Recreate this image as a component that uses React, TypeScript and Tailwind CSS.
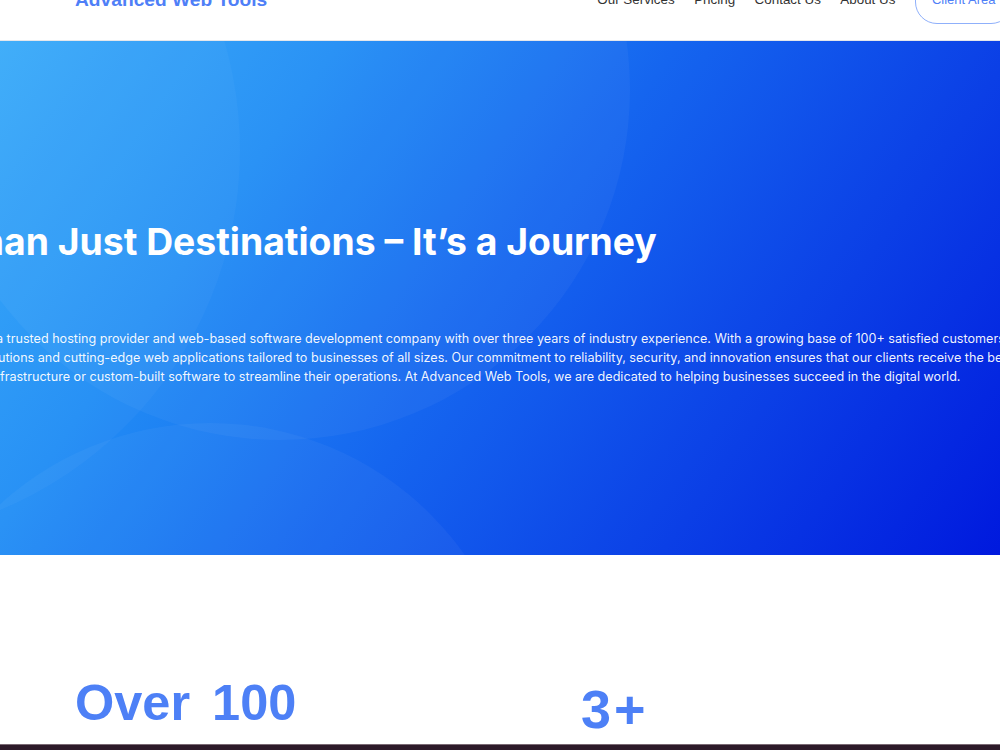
import React from "react";

function Line({ prefix, text, offset }: { prefix: string; text: string; offset: string }) {
  return (
    <div className={offset}>
      <span className="-ml-[400px] inline-block w-[400px] text-right">{prefix}</span>
      {text}
    </div>
  );
}

export default function App() {
  return (
    <div className="h-[750px] w-[1000px] overflow-hidden bg-white">
      <div className="-mt-[40px]">
        {/* Header */}
        <header className="flex h-[81px] w-[1100px] items-center border-b border-[#e5e7eb] bg-white pl-[75px]" style={{ fontFamily: "'Liberation Sans', Arial, sans-serif" }}>
          <div className="text-[19.2px] font-bold text-[#4f7ff7]">Advanced Web Tools</div>
          <nav className="ml-[330px] flex items-center gap-[19.5px] text-[13.4px] text-[#333333]">
            <span>Our Services</span>
            <span>Pricing</span>
            <span>Contact Us</span>
            <span>About Us</span>
            <span className="flex h-[48px] items-center rounded-[22px] border border-[#8fb0fb] px-[16px] text-[13px] text-[#4f7ff7]">Client Area</span>
          </nav>
        </header>

        {/* Hero */}
        <section className="relative h-[514px] overflow-hidden bg-[linear-gradient(125deg,#33a9f9_0%,#228ef5_25%,#1565ef_50%,#0b3fe6_75%,#0019de_100%)]" style={{ fontFamily: "Inter, 'Noto Sans', sans-serif" }}>
          <div className="pointer-events-none absolute left-[-70px] top-[-301px] h-[700px] w-[700px] rounded-full bg-white/[0.04]" />
          <div className="pointer-events-none absolute left-[-540px] top-[-281px] h-[780px] w-[780px] rounded-full bg-white/[0.03]" />
          <div className="pointer-events-none absolute left-[-102px] top-[382px] h-[624px] w-[624px] rounded-full bg-white/[0.04]" />

          <div className="relative pt-[177px]">
            <h1 className="ml-[-147px] whitespace-nowrap text-[37.3px] font-bold leading-[48px] text-white">
              More Than Just Destinations – It’s a Journey
            </h1>
            <div className="mt-[63px] whitespace-nowrap text-[12.6px] leading-[19px] text-white/95">
              <Line
                offset="ml-[-4px]"
                prefix="Advanced Web Tools is "
                text="a trusted hosting provider and web-based software development company with over three years of industry experience. With a growing base of 100+ satisfied customers, we"
              />
              <Line
                offset="ml-[-2px]"
                prefix="We deliver robust hosting sol"
                text="utions and cutting-edge web applications tailored to businesses of all sizes. Our commitment to reliability, security, and innovation ensures that our clients receive the best"
              />
              <Line
                offset="ml-[0px]"
                prefix="service, whether they need in"
                text="frastructure or custom-built software to streamline their operations. At Advanced Web Tools, we are dedicated to helping businesses succeed in the digital world."
              />
            </div>
          </div>
        </section>

        {/* Stats */}
        <section className="flex h-[189px] pl-[75px]" style={{ fontFamily: "'Liberation Sans', Arial, sans-serif" }}>
          <div className="flex w-[506px] gap-[22px] pt-[123px] text-[50.5px] font-bold leading-none text-[#4d80f6]">
            <span>Over</span>
            <span>100</span>
          </div>
          <div className="pt-[127px] text-[54px] font-bold leading-none tracking-[3px] text-[#4d80f6]">3+</div>
        </section>

        <div className="h-[20px] border-t border-[#7a6a74] bg-[#2d1a29]" />
      </div>
    </div>
  );
}
